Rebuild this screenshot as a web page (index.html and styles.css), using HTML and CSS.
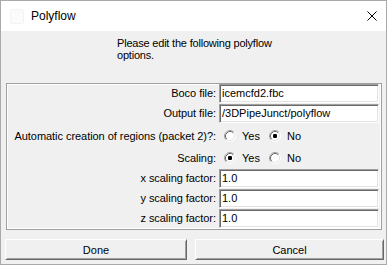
FILE: index.html
```html
<!DOCTYPE html>
<html>
<head>
<meta charset="utf-8">
<link rel="stylesheet" href="styles.css">
</head>
<body>
<div class="window">
  <div class="titlebar">
    <span class="app-icon"></span>
    <span class="title">Polyflow</span>
    <svg class="close" width="10" height="10" viewBox="0 0 10 10"><path d="M0.5 0.5 L9.5 9.5 M9.5 0.5 L0.5 9.5" stroke="#000" stroke-width="1" fill="none"/></svg>
  </div>
  <div class="body">
    <p class="message">Please edit the following polyflow options.</p>
    <div class="frame">
      <div class="row row-entry"><span class="label">Boco file:</span><div class="entry">icemcfd2.fbc</div></div>
      <div class="row row-entry"><span class="label">Output file:</span><div class="entry">/3DPipeJunct/polyflow</div></div>
      <div class="row row-radio row-tall"><span class="label">Automatic creation of regions (packet 2)?:</span>
        <div class="radios">
          <span class="radio"><svg width="12" height="12" viewBox="0 0 12 12"><circle cx="6" cy="6" r="5" fill="#fff"/><path d="M2.11 9.89 A5.5 5.5 0 0 1 9.89 2.11" stroke="#a0a0a0" fill="none"/><path d="M9.89 2.11 A5.5 5.5 0 0 1 2.11 9.89" stroke="#fff" fill="none"/><path d="M2.82 9.18 A4.5 4.5 0 0 1 9.18 2.82" stroke="#696969" fill="none"/><path d="M9.18 2.82 A4.5 4.5 0 0 1 2.82 9.18" stroke="#e3e3e3" fill="none"/></svg>Yes</span>
          <span class="radio"><svg width="12" height="12" viewBox="0 0 12 12"><circle cx="6" cy="6" r="5" fill="#fff"/><path d="M2.11 9.89 A5.5 5.5 0 0 1 9.89 2.11" stroke="#a0a0a0" fill="none"/><path d="M9.89 2.11 A5.5 5.5 0 0 1 2.11 9.89" stroke="#fff" fill="none"/><path d="M2.82 9.18 A4.5 4.5 0 0 1 9.18 2.82" stroke="#696969" fill="none"/><path d="M9.18 2.82 A4.5 4.5 0 0 1 2.82 9.18" stroke="#e3e3e3" fill="none"/><rect x="4" y="4" width="4" height="4" rx="1.2" fill="#000"/></svg>No</span>
        </div>
      </div>
      <div class="row row-radio"><span class="label">Scaling:</span>
        <div class="radios">
          <span class="radio"><svg width="12" height="12" viewBox="0 0 12 12"><circle cx="6" cy="6" r="5" fill="#fff"/><path d="M2.11 9.89 A5.5 5.5 0 0 1 9.89 2.11" stroke="#a0a0a0" fill="none"/><path d="M9.89 2.11 A5.5 5.5 0 0 1 2.11 9.89" stroke="#fff" fill="none"/><path d="M2.82 9.18 A4.5 4.5 0 0 1 9.18 2.82" stroke="#696969" fill="none"/><path d="M9.18 2.82 A4.5 4.5 0 0 1 2.82 9.18" stroke="#e3e3e3" fill="none"/><rect x="4" y="4" width="4" height="4" rx="1.2" fill="#000"/></svg>Yes</span>
          <span class="radio"><svg width="12" height="12" viewBox="0 0 12 12"><circle cx="6" cy="6" r="5" fill="#fff"/><path d="M2.11 9.89 A5.5 5.5 0 0 1 9.89 2.11" stroke="#a0a0a0" fill="none"/><path d="M9.89 2.11 A5.5 5.5 0 0 1 2.11 9.89" stroke="#fff" fill="none"/><path d="M2.82 9.18 A4.5 4.5 0 0 1 9.18 2.82" stroke="#696969" fill="none"/><path d="M9.18 2.82 A4.5 4.5 0 0 1 2.82 9.18" stroke="#e3e3e3" fill="none"/></svg>No</span>
        </div>
      </div>
      <div class="row row-entry"><span class="label">x scaling factor:</span><div class="entry">1.0</div></div>
      <div class="row row-entry"><span class="label">y scaling factor:</span><div class="entry">1.0</div></div>
      <div class="row row-entry"><span class="label">z scaling factor:</span><div class="entry">1.0</div></div>
    </div>
    <div class="buttons">
      <button class="btn btn-done">Done</button>
      <button class="btn btn-cancel">Cancel</button>
    </div>
  </div>
</div>
</body>
</html>
```
FILE: styles.css
```css
* { box-sizing: border-box; }
html, body { margin: 0; padding: 0; background: #fff; }
body { font-family: "Liberation Sans", Arial, sans-serif; font-size: 11px; color: #000; }

.window {
  width: 387px;
  height: 265px;
  border: 1px solid #aaaaaa;
  display: flex;
  flex-direction: column;
}

.titlebar {
  height: 30px;
  background: #fff;
  display: flex;
  align-items: center;
  padding-left: 9px;
  padding-right: 9px;
}
.app-icon {
  width: 14px;
  height: 15px;
  border: 1px solid #f3f3f3;
  border-radius: 2px;
  background: #fbfbfb;
  margin-right: 7px;
}
.title { font-size: 12px; flex: 1; }
.close { display: block; margin-right: 0; }

.body {
  flex: 1;
  background: #f0f0f0;
  display: flex;
  flex-direction: column;
}

.message {
  margin: 0;
  padding-top: 6px;
  padding-left: 116px;
  width: 290px;
  line-height: 12px;
  letter-spacing: -0.2px;
}

.frame {
  margin: 22px 4px 0 5px;
  border: 1px solid #a0a0a0;
  box-shadow: inset 0 0 0 1px #fff;
  padding-right: 2px;
}

.row {
  display: grid;
  grid-template-columns: 1fr 160px;
  column-gap: 3px;
  height: 20px;
}
.row-entry { align-items: start; }
.row-entry .label { line-height: 19px; }
.row-radio { height: 22px; align-items: center; }
.row-tall { height: 23px; }

.label { text-align: right; white-space: nowrap; letter-spacing: -0.05px; }

.entry {
  height: 19px;
  background: #fff;
  border: 1px solid;
  border-color: #a0a0a0 #fff #fff #a0a0a0;
  box-shadow: inset 1px 1px 0 #696969, inset -1px -1px 0 #e3e3e3;
  padding-left: 2px;
  line-height: 17px;
  white-space: nowrap;
  overflow: hidden;
}

.radios { display: flex; align-items: center; padding-left: 5px; gap: 9px; }
.radio { display: flex; align-items: center; gap: 6px; }
.radio svg { display: block; }

.buttons {
  display: flex;
  gap: 8px;
  margin-top: 9px;
  padding-left: 4px;
}
.btn {
  height: 21px;
  font-family: "Liberation Sans", Arial, sans-serif;
  font-size: 11px;
  color: #000;
  background: #f0f0f0;
  border: 1px solid;
  border-color: #fff #696969 #696969 #fff;
  box-shadow: inset 1px 1px 0 #f0f0f0, inset -1px -1px 0 #a0a0a0;
  padding: 0;
}
.btn-done { width: 182px; }
.btn-cancel { width: 189px; }
```
